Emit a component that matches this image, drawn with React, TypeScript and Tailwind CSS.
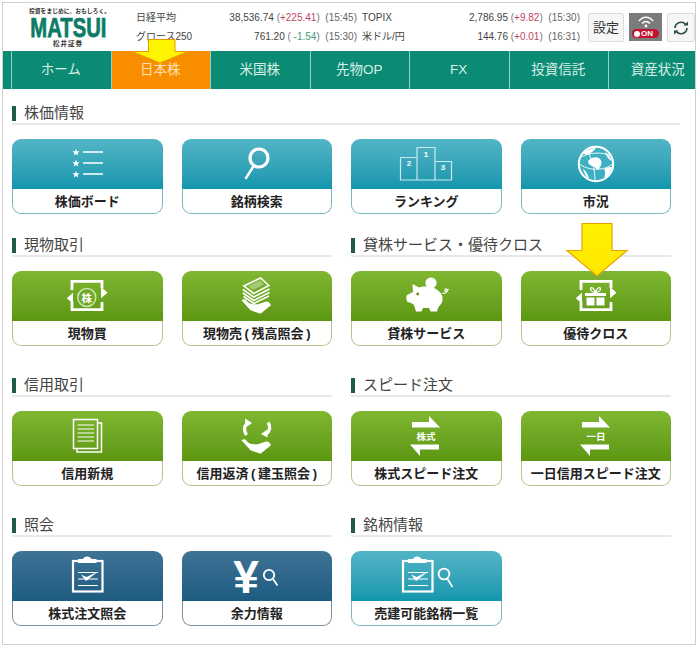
import React from "react";

const F = "[font-family:'Liberation_Sans','Noto_Sans_CJK_JP',sans-serif]";

type Tone = "teal" | "green" | "navy";

const tones: Record<Tone, { top: string; bottom: string }> = {
  teal: { top: "bg-gradient-to-b from-[#52b5c6] to-[#0f96ad]", bottom: "border-[#7db8c2]" },
  green: { top: "bg-gradient-to-b from-[#80b732] to-[#5c9711]", bottom: "border-[#b9c290]" },
  navy: { top: "bg-gradient-to-b from-[#3f7395] to-[#1c5b80]", bottom: "border-[#7d909f]" },
};

function Ico({ children }: { children: React.ReactNode }) {
  return (
    <svg viewBox="0 0 150 50" width="150" height="50" className="block mx-auto overflow-visible" fill="none">
      {children}
    </svg>
  );
}

const star = (x: number, y: number) => {
  const pts: string[] = [];
  for (let i = 0; i < 10; i++) {
    const r = i % 2 ? 1.6 : 3.8;
    const a = -Math.PI / 2 + (i * Math.PI) / 5;
    pts.push(`${x + r * Math.cos(a)},${y + r * Math.sin(a)}`);
  }
  return <polygon key={`${x}${y}`} points={pts.join(" ")} fill="#fff" />;
};

const StarList = () => (
  <Ico>
    {star(64, 13.5)}
    {star(64, 24.5)}
    {star(64, 35.5)}
    <path d="M71 13H91M71 24H91M71 35H91" stroke="#fff" strokeWidth="1.4" />
  </Ico>
);

const Search = () => (
  <Ico>
    <circle cx="77" cy="19" r="9" stroke="#fff" strokeWidth="3.2" />
    <path d="M71 28L64 39" stroke="#fff" strokeWidth="2.4" strokeLinecap="round" />
  </Ico>
);

const Podium = () => (
  <Ico>
    <path d="M49.5 18.5H66M84 22.5H100.5V41H49.5V18.5M66 8.5H84V41H66V8.5" stroke="#c7eaf0" strokeWidth="1.2" />
    <text x="75" y="18" fill="#fff" fontSize="8" fontWeight="700" textAnchor="middle" fontFamily="Liberation Sans">1</text>
    <text x="58" y="27" fill="#fff" fontSize="8" fontWeight="700" textAnchor="middle" fontFamily="Liberation Sans">2</text>
    <text x="92" y="31" fill="#fff" fontSize="8" fontWeight="700" textAnchor="middle" fontFamily="Liberation Sans">3</text>
  </Ico>
);

const Globe = () => (
  <Ico>
    <circle cx="75" cy="25" r="17.2" fill="#3fb0c2" stroke="#fff" strokeWidth="2" />
    <path d="M67 22C70 18 76 17 79 20C82 23 80 27 78 30C75 31 74 27 71 27C69 26 67 25 67 22Z" fill="#fff" />
    <path d="M62 14C66 11 71 9 75 9C73 12 69 15 65 16ZM83 30C86 28 89 28 91 28C90 33 87 37 83 39C84 36 85 33 83 30ZM62 30C64 31 67 35 68 40C65 38 63 34 62 30ZM84 13C87 15 90 19 91 22C88 21 85 17 84 13Z" fill="#fff" />
    <path d="M58.5 25C66 31 82 33 91.5 25M66 11C72 22 74 32 74 42M60 18C68 14 80 12 90 17" stroke="#fff" strokeWidth="0.9" />
  </Ico>
);

const Exchange = ({ children }: { children: React.ReactNode }) => (
  <Ico>
    <path d="M60 19V10.4H90V17M90 31V38.6H60V30" stroke="#fff" strokeWidth="2.8" />
    <path d="M89 15.7L95.5 21.7L89 27.3Z" fill="#fff" />
    <path d="M61 21.7L54.7 27.3L61 32.3Z" fill="#fff" />
    {children}
  </Ico>
);

const KabuBuy = () => (
  <Exchange>
    <circle cx="74.8" cy="26.5" r="9" fill="#6fa928" stroke="#cfe3ad" strokeWidth="1.5" />
    <text x="74.8" y="30.5" fill="#fff" fontSize="10.5" fontWeight="700" textAnchor="middle" fontFamily="Noto Sans CJK JP">株</text>
  </Exchange>
);

const Gift = () => (
  <Exchange>
    <path d="M64 22H85V25H64ZM65.5 26.5H73.5V34.5H65.5ZM75.5 26.5H83.5V34.5H75.5Z" fill="#fff" />
    <path d="M74.5 21.5C71 21 69 19 69.5 17.5C70.5 15.5 73.5 17.5 74.5 21.5C75.5 17.5 78.5 15.5 79.5 17.5C80 19 78 21 74.5 21.5Z" stroke="#fff" strokeWidth="1.3" />
  </Exchange>
);

const handPath = "M59.5 29.3L68.5 39.3L78.5 42.7L89 34.3C88 31.5 86 30 84 30.6L76 33.2H71L68.5 32.7C66 32 65 30 63.5 28.5C62 28 60.5 28.5 59.5 29.3Z";

const Bills = () => (
  <Ico>
    <path d="M61.8 15L78.5 7L86.8 14.5L71.8 22.5Z" stroke="#fff" strokeWidth="1.6" />
    <path d="M66 15L78 9.5L82 13.5L71 19Z" fill="#fff" opacity="0.35" />
    <path d="M60.8 18.5L71.8 26L87.5 18M60.8 22L71.8 29.5L87.5 21.5M61.5 25.5L71.8 32.5L87 25" stroke="#fff" strokeWidth="1.6" />
    <path d={handPath} fill="#fff" />
  </Ico>
);

const Returning = () => (
  <Ico>
    <path d="M64.5 24C61.5 20 62 15 65 12.5" stroke="#fff" strokeWidth="3.4" />
    <path d="M63 7.5L70 12L63.5 16.5Z" fill="#fff" />
    <path d="M86 11.5C88.8 15.5 88 20 84 23" stroke="#fff" strokeWidth="3.4" />
    <path d="M79 23L85.5 18.5L85.5 26.5Z" fill="#fff" />
    <path d={handPath} fill="#fff" />
  </Ico>
);

const Piggy = () => (
  <Ico>
    <circle cx="80" cy="12" r="5.6" fill="#fff" />
    <path d="M56 24L62 21L61.5 13L68 16.5C72 15 80 15 85 18C90 21 92 25 91.5 29C91 33 88 35 87 37L86 40.5H79.5L78 37H72L70.5 40.5H65L63 34C61 32 59 31.5 56.5 31C55 29 55 26 56 24Z" fill="#fff" />
    <circle cx="66.7" cy="23" r="1.4" fill="#5f8f14" />
    <path d="M91 22C93 23 96 22 96.5 19.5C96.5 17.5 94 17.5 93.8 19.3C93.8 20.6 96 21 97.5 18" stroke="#fff" strokeWidth="1.2" />
  </Ico>
);

const Docs = () => (
  <Ico>
    <path d="M65 37.5V41H89.5V12H86" stroke="#fff" strokeWidth="1.5" />
    <rect x="61.5" y="8.5" width="24" height="29" stroke="#fff" strokeWidth="1.5" />
    <path d="M65.5 14H82M65.5 18H82M65.5 22H82M65.5 26H82M65.5 30H82" stroke="#fff" strokeWidth="1" />
  </Ico>
);

const SpeedArrows = ({ label }: { label: string }) => (
  <Ico>
    <path d="M61 11H78V5L89 16.5H61Z" fill="#fff" />
    <path d="M59 33.5H88V38.5H69V45Z" fill="#fff" />
    <text x="75" y="28.5" fill="#fff" fontSize="9.5" fontWeight="700" textAnchor="middle" fontFamily="Noto Sans CJK JP">{label}</text>
  </Ico>
);

const Board = ({ dx }: { dx: number }) => (
  <g transform={`translate(${dx} 0)`}>
    <rect x="1" y="10" width="29.5" height="30.5" stroke="#fff" strokeWidth="2.2" />
    <path d="M6 12V8H11C12 4.5 18 4.5 19.5 8H24.5V12Z" fill="#fff" />
    <path d="M6 21.5H26M6 28H26M6 34.5H26" stroke="#fff" strokeWidth="1.2" />
    <path d="M9 23.5L14 30L26 20.5L14.5 26Z" fill="#fff" />
  </g>
);

const Clip = () => (
  <Ico>
    <Board dx={60} />
  </Ico>
);

const Yen = () => (
  <Ico>
    <text x="64" y="42" fill="#fff" fontSize="46" fontWeight="700" textAnchor="middle" fontFamily="Liberation Sans">¥</text>
    <circle cx="87" cy="24" r="5.2" stroke="#fff" strokeWidth="1.8" />
    <path d="M91 28L95.5 34.5" stroke="#fff" strokeWidth="1.8" />
  </Ico>
);

const ClipSearch = () => (
  <Ico>
    <Board dx={51} />
    <circle cx="93" cy="23" r="5.4" stroke="#fff" strokeWidth="1.8" />
    <path d="M96.5 28L101.5 36" stroke="#fff" strokeWidth="1.6" />
  </Ico>
);

function Card({ tone, label, icon }: { tone: Tone; label: string; icon: React.ReactNode }) {
  const t = tones[tone];
  return (
    <div className="w-[150.5px] h-[75px] flex flex-col shrink-0">
      <div className={`h-[50px] rounded-t-[9px] ${t.top}`}>{icon}</div>
      <div
        className={`h-[25px] bg-white border border-t-0 rounded-b-[9px] flex items-center justify-center text-[13px] leading-none font-bold text-[#222] whitespace-nowrap ${t.bottom}`}
      >
        {label}
      </div>
    </div>
  );
}

function Heading({ children }: { children: React.ReactNode }) {
  return (
    <div className="h-[22px] mb-[14px] border-b-2 border-[#e8e8e8] flex items-start">
      <span className="w-[4px] h-[15px] mt-[3px] bg-[#1f5c48] mr-[8px]" />
      <span className="text-[15px] leading-[20px] text-[#444]">{children}</span>
    </div>
  );
}

function Section({ title, children, className = "" }: { title: string; children: React.ReactNode; className?: string }) {
  return (
    <section className={className}>
      <Heading>{title}</Heading>
      <div className="flex gap-[19px]">{children}</div>
    </section>
  );
}

const navItems = ["ホーム", "日本株", "米国株", "先物OP", "FX", "投資信託", "資産状況"];

function Quote({ name, value, delta, time, tone, nameW, valueW }: { name: string; value: string; delta: string; time: string; tone: string; nameW: string; valueW: string }) {
  return (
    <>
      <span className={`${nameW} whitespace-nowrap`}>{name}</span>
      <span className={`${valueW} text-right whitespace-nowrap text-[#444]`}>
        {value} <span className="text-[#777]">(</span>
        <span className={tone}>{delta}</span>
        <span className="text-[#777]">)</span>
        <span className="text-[#666]"> &nbsp;{time}</span>
      </span>
    </>
  );
}

export default function App() {
  return (
    <div className={`relative w-[700px] h-[646px] bg-white overflow-hidden pl-[2px] pt-[2px] ${F}`}>
      <div className="w-[694px] h-[643px] border border-[#cfcfcf] overflow-hidden">
        <header className="h-[48px] flex items-start">
          <div className="ml-[26px] w-[107px] pt-[5px] relative">
            <div className="text-[5.8px] leading-[7px] font-bold text-[#333] whitespace-nowrap">投資をまじめに、おもしろく。</div>
            <div className="w-[78px] h-[25px] flex items-center justify-center">
              <span className="text-[22px] leading-[25px] font-bold text-[#0c7c66] scale-x-[0.92] scale-y-[1.25] [-webkit-text-stroke:0.6px_#0c7c66]">MATSUI</span>
            </div>
            <div className="w-[78px] text-center text-[6.5px] leading-[8px] font-bold tracking-[1px] text-[#333]">松井証券</div>
          </div>
          <div className="w-[444px] pt-[5px] text-[10px] leading-[19px] text-[#444]">
            <div className="flex">
              <Quote name="日経平均" value="38,536.74" delta="+225.41" time="(15:45)" tone="text-[#c0455e]" nameW="w-[80px]" valueW="w-[141px]" />
              <span className="w-[5px]" />
              <Quote name="TOPIX" value="2,786.95" delta="+9.82" time="(15:30)" tone="text-[#c0455e]" nameW="w-[60px]" valueW="w-[158px]" />
            </div>
            <div className="flex">
              <Quote name="グロース250" value="761.20" delta=" -1.54" time="(15:30)" tone="text-[#3f9c78]" nameW="w-[80px]" valueW="w-[141px]" />
              <span className="w-[5px]" />
              <Quote name="米ドル/円" value="144.76" delta="+0.01" time="(16:31)" tone="text-[#c0455e]" nameW="w-[60px]" valueW="w-[158px]" />
            </div>
          </div>
          <div className="ml-[8px] mt-[10px] flex gap-[5px]">
            <div className="w-[36px] h-[29px] bg-[#f6f6f6] border border-[#dcdcdc] rounded-[2px] flex items-center justify-center text-[13px] text-[#333]">設定</div>
            <div className="w-[33px] h-[28px] bg-[#7b7b7b] relative flex justify-center">
              <svg viewBox="0 0 20 14" width="20" height="14" fill="none" className="mt-[1px]">
                <path d="M3 7C7 2 13 2 17 7M6 9.5C8.5 7 11.5 7 14 9.5" stroke="#fff" strokeWidth="1.4" />
                <circle cx="10" cy="12" r="1.4" fill="#fff" />
              </svg>
              <div className="absolute left-[3px] top-[16px] w-[27px] h-[9px] rounded-full bg-[#c4112f] flex items-center pl-[1.5px]">
                <span className="w-[6px] h-[6px] rounded-full bg-white mr-[1.5px]" />
                <span className="text-[8px] leading-[9px] font-bold text-white">ON</span>
              </div>
            </div>
            <div className="w-[28px] h-[29px] bg-[#f6f6f6] border border-[#dcdcdc] rounded-[2px] flex items-center justify-center">
              <svg viewBox="0 0 16 16" width="16" height="16" fill="none">
                <path d="M2 8A6 6 0 0 1 13 5M14 8A6 6 0 0 1 3 11" stroke="#2f4f46" strokeWidth="1.7" />
                <path d="M10.5 5.5H15V1.5ZM5.5 10.5H1V14.5Z" fill="#2f4f46" />
              </svg>
            </div>
          </div>
        </header>

        <nav className="h-[38px] bg-[#0c8b74] flex text-[13.5px] text-[#d9efe9]">
          <div className="w-[8px] shrink-0" />
          {navItems.map((n, i) => (
            <div
              key={n}
              className={
                i === 1
                  ? "w-[99.5px] shrink-0 border-l border-[#8ed3c4] bg-[#f98d00] text-[#fde3b5] flex items-center justify-center pr-[1px]"
                  : "w-[99.5px] shrink-0 border-l border-[#8ed3c4] flex items-center justify-center pr-[1px]"
              }
            >
              {n}
            </div>
          ))}
        </nav>

        <main className="pl-[9px] w-[677px] pt-[14px] flex flex-col">
          <Section title="株価情報">
            <Card tone="teal" label="株価ボード" icon={<StarList />} />
            <Card tone="teal" label="銘柄検索" icon={<Search />} />
            <Card tone="teal" label="ランキング" icon={<Podium />} />
            <Card tone="teal" label="市況" icon={<Globe />} />
          </Section>

          <div className="mt-[21px] grid grid-cols-[320px_320px] gap-x-[19px] gap-y-[29px]">
            <Section title="現物取引">
              <Card tone="green" label="現物買" icon={<KabuBuy />} />
              <Card tone="green" label={"現物売\u2009(\u2009残高照会\u2009)"} icon={<Bills />} />
            </Section>
            <Section title="貸株サービス・優待クロス">
              <Card tone="green" label="貸株サービス" icon={<Piggy />} />
              <Card tone="green" label="優待クロス" icon={<Gift />} />
            </Section>
            <Section title="信用取引">
              <Card tone="green" label="信用新規" icon={<Docs />} />
              <Card tone="green" label={"信用返済\u2009(\u2009建玉照会\u2009)"} icon={<Returning />} />
            </Section>
            <Section title="スピード注文">
              <Card tone="green" label="株式スピード注文" icon={<SpeedArrows label="株式" />} />
              <Card tone="green" label="一日信用スピード注文" icon={<SpeedArrows label="一日" />} />
            </Section>
            <Section title="照会">
              <Card tone="navy" label="株式注文照会" icon={<Clip />} />
              <Card tone="navy" label="余力情報" icon={<Yen />} />
            </Section>
            <Section title="銘柄情報">
              <Card tone="teal" label="売建可能銘柄一覧" icon={<ClipSearch />} />
            </Section>
          </div>
        </main>
      </div>

      <svg className="absolute left-[128px] top-[36px]" width="64" height="30" viewBox="0 0 64 30">
        <path d="M20.5 3.5H47V15.5H60L32 27L4 15.5H20.5Z" fill="#fdf500" stroke="#e89a00" strokeWidth="1" />
      </svg>
      <svg className="absolute left-[563px] top-[220px]" width="68" height="60" viewBox="0 0 68 60">
        <defs>
          <linearGradient id="arr" x1="0" y1="0" x2="0" y2="1">
            <stop offset="0" stopColor="#fff200" />
            <stop offset="1" stopColor="#ffe600" />
          </linearGradient>
        </defs>
        <path d="M19 3.5H49V30.5H64L34 56L4 30.5H19Z" fill="url(#arr)" stroke="#e8a200" strokeWidth="1.2" />
      </svg>
    </div>
  );
}
